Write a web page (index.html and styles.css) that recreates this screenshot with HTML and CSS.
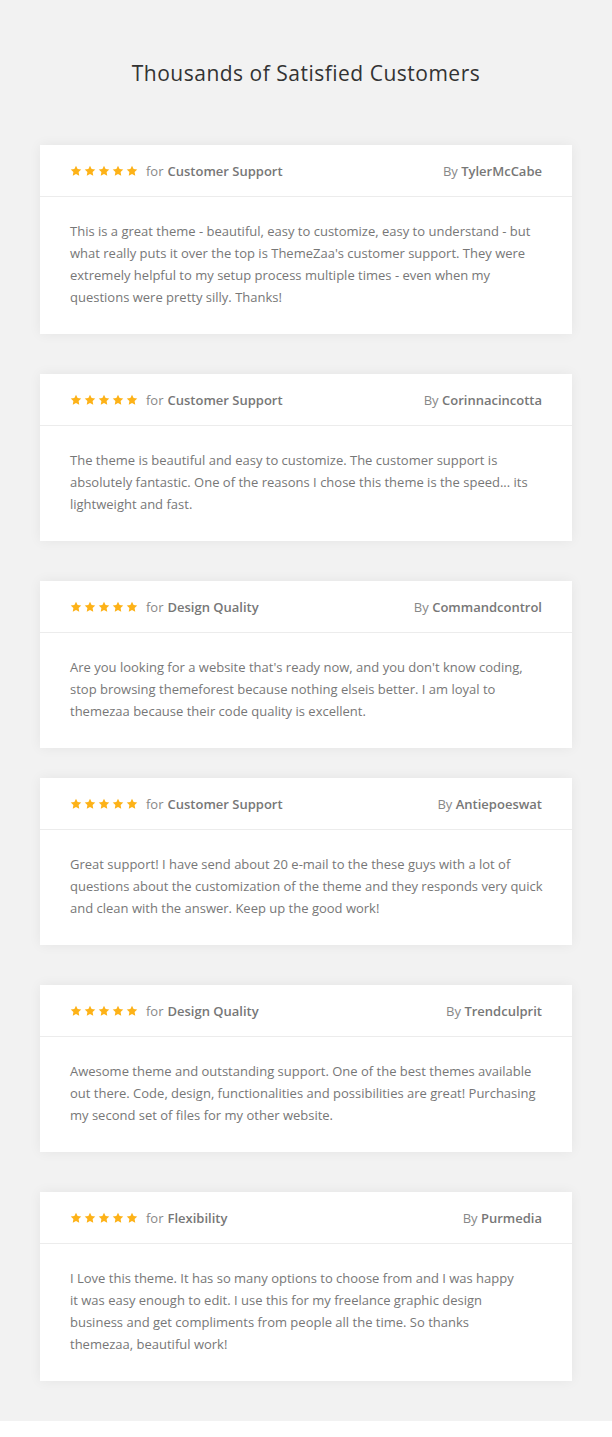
FILE: index.html
```html
<!DOCTYPE html>
<html>

<head>
    <title>Testimonials</title>
    <link rel="stylesheet" href="styles.css">
</head>

<body>
    <svg class="defs" width="0" height="0">
        <symbol id="star" viewBox="0 0 24 24">
            <path d="M12 1.5l3.2 6.6 7.3 1-5.3 5.1 1.3 7.2L12 18l-6.5 3.4 1.3-7.2L1.5 9.1l7.3-1z" />
        </symbol>
    </svg>

    <section class="reviews">
        <h2 class="title">Thousands of Satisfied Customers</h2>

        <div class="review">
            <div class="review-head">
                <div class="rating">
                    <span class="stars">
                        <svg><use href="#star" /></svg><svg><use href="#star" /></svg><svg><use href="#star" /></svg><svg><use href="#star" /></svg><svg><use href="#star" /></svg>
                    </span>
                    for <b>Customer Support</b>
                </div>
                <div class="author">By <b>TylerMcCabe</b></div>
            </div>
            <p class="review-text">This is a great theme - beautiful, easy to customize, easy to understand - but what really puts it over the top is ThemeZaa's customer support. They were extremely helpful to my setup process multiple times - even when my questions were pretty silly. Thanks!</p>
        </div>

        <div class="review">
            <div class="review-head">
                <div class="rating">
                    <span class="stars">
                        <svg><use href="#star" /></svg><svg><use href="#star" /></svg><svg><use href="#star" /></svg><svg><use href="#star" /></svg><svg><use href="#star" /></svg>
                    </span>
                    for <b>Customer Support</b>
                </div>
                <div class="author">By <b>Corinnacincotta</b></div>
            </div>
            <p class="review-text">The theme is beautiful and easy to customize. The customer support is absolutely fantastic. One of the reasons I chose this theme is the speed... its lightweight and fast.</p>
        </div>

        <div class="review review-tight">
            <div class="review-head">
                <div class="rating">
                    <span class="stars">
                        <svg><use href="#star" /></svg><svg><use href="#star" /></svg><svg><use href="#star" /></svg><svg><use href="#star" /></svg><svg><use href="#star" /></svg>
                    </span>
                    for <b>Design Quality</b>
                </div>
                <div class="author">By <b>Commandcontrol</b></div>
            </div>
            <p class="review-text">Are you looking for a website that's ready now, and you don't know coding, stop browsing themeforest because nothing elseis better. I am loyal to themezaa because their code quality is excellent.</p>
        </div>

        <div class="review">
            <div class="review-head">
                <div class="rating">
                    <span class="stars">
                        <svg><use href="#star" /></svg><svg><use href="#star" /></svg><svg><use href="#star" /></svg><svg><use href="#star" /></svg><svg><use href="#star" /></svg>
                    </span>
                    for <b>Customer Support</b>
                </div>
                <div class="author">By <b>Antiepoeswat</b></div>
            </div>
            <p class="review-text">Great support! I have send about 20 e-mail to the these guys with a lot of questions about the customization of the theme and they responds very quick and clean with the answer. Keep up the good work!</p>
        </div>

        <div class="review">
            <div class="review-head">
                <div class="rating">
                    <span class="stars">
                        <svg><use href="#star" /></svg><svg><use href="#star" /></svg><svg><use href="#star" /></svg><svg><use href="#star" /></svg><svg><use href="#star" /></svg>
                    </span>
                    for <b>Design Quality</b>
                </div>
                <div class="author">By <b>Trendculprit</b></div>
            </div>
            <p class="review-text">Awesome theme and outstanding support. One of the best themes available out there. Code, design, functionalities and possibilities are great! Purchasing my second set of files for my other website.</p>
        </div>

        <div class="review">
            <div class="review-head">
                <div class="rating">
                    <span class="stars">
                        <svg><use href="#star" /></svg><svg><use href="#star" /></svg><svg><use href="#star" /></svg><svg><use href="#star" /></svg><svg><use href="#star" /></svg>
                    </span>
                    for <b>Flexibility</b>
                </div>
                <div class="author">By <b>Purmedia</b></div>
            </div>
            <p class="review-text narrow">I Love this theme. It has so many options to choose from and I was happy it was easy enough to edit. I use this for my freelance graphic design business and get compliments from people all the time. So thanks themezaa, beautiful work!</p>
        </div>
    </section>
</body>

</html>
```

FILE: styles.css
```css
body {
    font-family: "Open Sans", Arial, sans-serif;
    background-color: #fff;
    color: #777;
    margin: 0;
}

.defs {
    position: absolute;
}

.reviews {
    background-color: #f2f2f2;
    padding: 58px 40px 40px;
}

.title {
    font-size: 21px;
    font-weight: 400;
    line-height: 30px;
    color: #333;
    text-align: center;
    margin: 0 0 57px;
    letter-spacing: 0.5px;
}

.review {
    background-color: #fff;
    box-shadow: 0 0 12px 0 rgba(0, 0, 0, 0.06);
    margin-bottom: 40px;
}

.review:last-child {
    margin-bottom: 0;
}

.review-tight {
    margin-bottom: 30px;
}

.review-head {
    display: flex;
    justify-content: space-between;
    align-items: center;
    height: 51px;
    padding: 0 30px;
    border-bottom: 1px solid #ececec;
    font-size: 13px;
    color: #888;
}

.rating {
    display: flex;
    align-items: center;
    gap: 4px;
}

.review-head b {
    font-weight: 600;
    color: #777;
}

.stars {
    display: flex;
    gap: 2px;
    margin-right: 4px;
}

.stars svg {
    width: 12px;
    height: 12px;
    fill: #fdb218;
}

.review-text {
    margin: 0;
    padding: 23px 26px 26px 30px;
    font-size: 13px;
    line-height: 22px;
    color: #777;
}

.narrow {
    padding-right: 50px;
}
```
